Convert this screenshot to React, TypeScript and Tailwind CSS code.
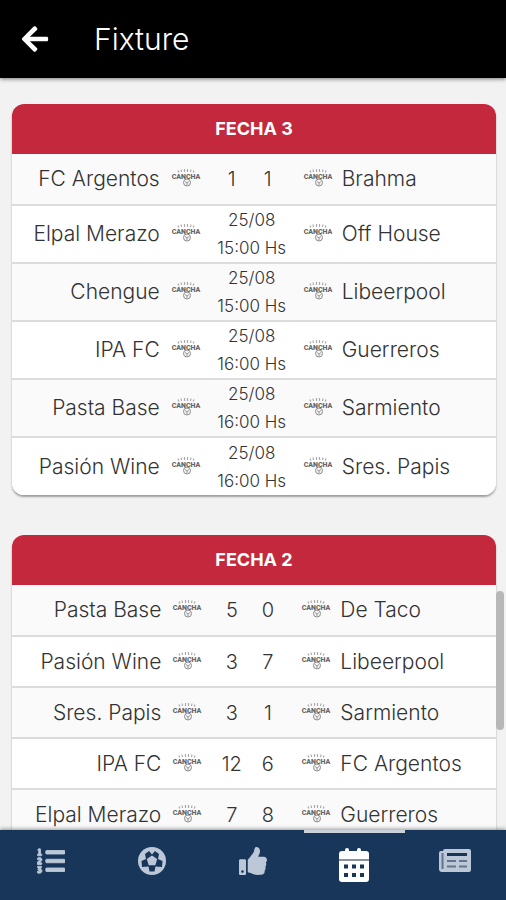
import React from 'react';
import { FaArrowLeft, FaListOl, FaThumbsUp } from 'react-icons/fa';

interface Match {
  home: string;
  away: string;
  score?: [number, number];
  date?: string;
  time?: string;
}

interface Round {
  title: string;
  homeWidth: string;
  middleWidth: string;
  matches: Match[];
}

const rounds: Round[] = [
  {
    title: 'FECHA 3',
    homeWidth: 'w-[33%]',
    middleWidth: 'w-[104px]',
    matches: [
      { home: 'FC Argentos', away: 'Brahma', score: [1, 1] },
      { home: 'Elpal Merazo', away: 'Off House', date: '25/08', time: '15:00 Hs' },
      { home: 'Chengue', away: 'Libeerpool', date: '25/08', time: '15:00 Hs' },
      { home: 'IPA FC', away: 'Guerreros', date: '25/08', time: '16:00 Hs' },
      { home: 'Pasta Base', away: 'Sarmiento', date: '25/08', time: '16:00 Hs' },
      { home: 'Pasión Wine', away: 'Sres. Papis', date: '25/08', time: '16:00 Hs' },
    ],
  },
  {
    title: 'FECHA 2',
    homeWidth: 'w-1/3',
    middleWidth: 'w-[101px]',
    matches: [
      { home: 'Pasta Base', away: 'De Taco', score: [5, 0] },
      { home: 'Pasión Wine', away: 'Libeerpool', score: [3, 7] },
      { home: 'Sres. Papis', away: 'Sarmiento', score: [3, 1] },
      { home: 'IPA FC', away: 'FC Argentos', score: [12, 6] },
      { home: 'Elpal Merazo', away: 'Guerreros', score: [7, 8] },
    ],
  },
];

function ClubLogo() {
  return (
    <svg viewBox="0 0 28 20" className="block w-7 h-5 mb-1 overflow-visible" aria-hidden="true">
      <path
        d="M6 3.500l.8 2M9 2.500l.5 2.500M12.500 2v3M15.500 2v3M19 2.500l-.5 2.500M22 3.500l-.8 2"
        stroke="#aaa"
        strokeWidth="1.2"
      />
      <text x="14" y="12" textAnchor="middle" fontSize="7" fontWeight="900" fill="#666" fontFamily="Roboto, sans-serif">
        CANCHA
      </text>
      <circle cx="15" cy="15.500" r="3.500" fill="#f4f4f4" stroke="#8c8c8c" />
      <path d="M13 14.500l2 1.500 2-1.500M15 16v2" fill="none" stroke="#999" />
    </svg>
  );
}

function BallIcon() {
  return (
    <svg viewBox="0 0 28 28" className="w-7 h-7" aria-hidden="true">
      <circle cx="14" cy="14" r="14" fill="currentColor" />
      <path
        d="M11.500 24.500l-1-5-6.500.500-.5-6 4.500-2-1-5 4-3 3 3.500L17 4l4 3-1 5 4.500 2-.5 6-6.500-.500-1 5z"
        fill="#18365a"
      />
      <path d="M14 8.500l5.200 3.500-1.900 6.300h-6.600L8.800 12z" fill="currentColor" />
    </svg>
  );
}

function CalendarIcon() {
  return (
    <svg viewBox="0 0 30 34" className="w-[30px] h-[34px]" aria-hidden="true">
      <path
        d="M3 3h3V2q0-2 2-2t2 2v1h8V2q0-2 2-2t2 2v1h5q3 0 3 3v5H0V6q0-3 3-3zM0 12.500h30V31q0 3-3 3H3q-3 0-3-3z"
        fill="currentColor"
      />
      <path d="M0 11h30v1.500H0z" fill="#8a8f98" />
      <path
        d="M5 16.500h4v4H5zM13 16.500h4v4h-4zM21 16.500h4v4h-4zM5 25h4v4H5zM13 25h4v4h-4zM21 25h4v4h-4z"
        fill="#18365a"
      />
    </svg>
  );
}

function NewsIcon() {
  return (
    <svg viewBox="0 0 32 23" className="w-8 h-[23px]" aria-hidden="true">
      <path d="M6 0h24q2 0 2 2v19q0 2-2 2H3q-3 0-3-3V4q0-2 2-2h2q0-2 2-2z" fill="currentColor" />
      <path d="M8 4h20v3H8z" fill="#18365a" />
      <path d="M3.500 4v16M8 12h9M20 12h8M8 17.500h9M20 17.500h8" stroke="#63758f" strokeWidth="2" />
    </svg>
  );
}

function MatchRow({ match }: { match: Match }) {
  return (
    <tr
      className={`border-b-2 border-[#dcdcdc] odd:bg-[#fafafa] even:bg-white last:border-b-0 ${
        match.score ? 'h-[51px]' : 'h-[58px]'
      }`}
    >
      <td className="pr-3 text-right text-[21px] whitespace-nowrap">{match.home}</td>
      <td><ClubLogo /></td>
      <td className="text-center">
        {match.score ? (
          <div className="flex justify-center gap-2 pr-1 text-xl">
            <span className="w-7">{match.score[0]}</span>
            <span className="w-7">{match.score[1]}</span>
          </div>
        ) : (
          <div className="text-[17px] leading-7">
            <div>{match.date}</div>
            <div>{match.time}</div>
          </div>
        )}
      </td>
      <td><ClubLogo /></td>
      <td className="pl-[10px] text-[21px] whitespace-nowrap">{match.away}</td>
    </tr>
  );
}

function RoundCard({ round }: { round: Round }) {
  return (
    <section className="rounded-xl overflow-hidden bg-white shadow-[0_2px_2px_rgba(0,0,0,0.35)]">
      <h2 className="bg-[#c4283c] text-white text-center text-lg font-bold leading-[50px]">{round.title}</h2>
      <table className="w-full table-fixed border-collapse text-[#333] font-light">
        <colgroup>
          <col className={round.homeWidth} />
          <col className="w-7" />
          <col className={round.middleWidth} />
          <col className="w-7" />
          <col />
        </colgroup>
        <tbody>
          {round.matches.map((match) => (
            <MatchRow key={match.home} match={match} />
          ))}
        </tbody>
      </table>
    </section>
  );
}

const tabs = [
  { label: 'Posiciones', icon: <FaListOl className="w-7 h-7 stroke-current stroke-[16px]" /> },
  { label: 'Partidos', icon: <BallIcon /> },
  { label: 'Votar', icon: <FaThumbsUp className="w-7 h-7" /> },
  { label: 'Fixture', icon: <CalendarIcon />, active: true },
  { label: 'Noticias', icon: <NewsIcon /> },
];

export default function App() {
  return (
    <div className="h-screen flex flex-col bg-[#f2f2f2] font-['Inter',sans-serif]">
      {/* Header */}
      <header className="relative z-10 flex items-center gap-11 h-[78px] px-5 bg-black text-white shadow-[0_1px_4px_rgba(0,0,0,0.5)]">
        <button type="button" aria-label="Volver">
          <FaArrowLeft className="w-[30px] h-[30px]" />
        </button>
        <h1 className="text-3xl font-light">Fixture</h1>
      </header>

      {/* Rounds */}
      <div className="relative flex-1 min-h-0">
        <main className="h-full overflow-y-auto [scrollbar-width:none] pt-[26px] pl-3 pr-[10px] space-y-10">
          {rounds.map((round) => (
            <RoundCard key={round.title} round={round} />
          ))}
        </main>
        <div className="absolute right-[2px] bottom-[100px] w-2 h-[139px] rounded-full bg-[#b8b8b8]" />
      </div>

      {/* Tabs */}
      <nav className="relative z-10 grid grid-cols-5 h-[70px] bg-[#18365a] shadow-[0_-1px_4px_rgba(0,0,0,0.4)]">
        {tabs.map((tab) => (
          <button
            key={tab.label}
            type="button"
            aria-label={tab.label}
            className={`flex items-center justify-center border-t-3 ${
              tab.active ? 'border-[#ccd2dc] pb-1 text-white' : 'border-transparent pb-3 text-[#bcc7d8]'
            }`}
          >
            {tab.icon}
          </button>
        ))}
      </nav>
    </div>
  );
}
